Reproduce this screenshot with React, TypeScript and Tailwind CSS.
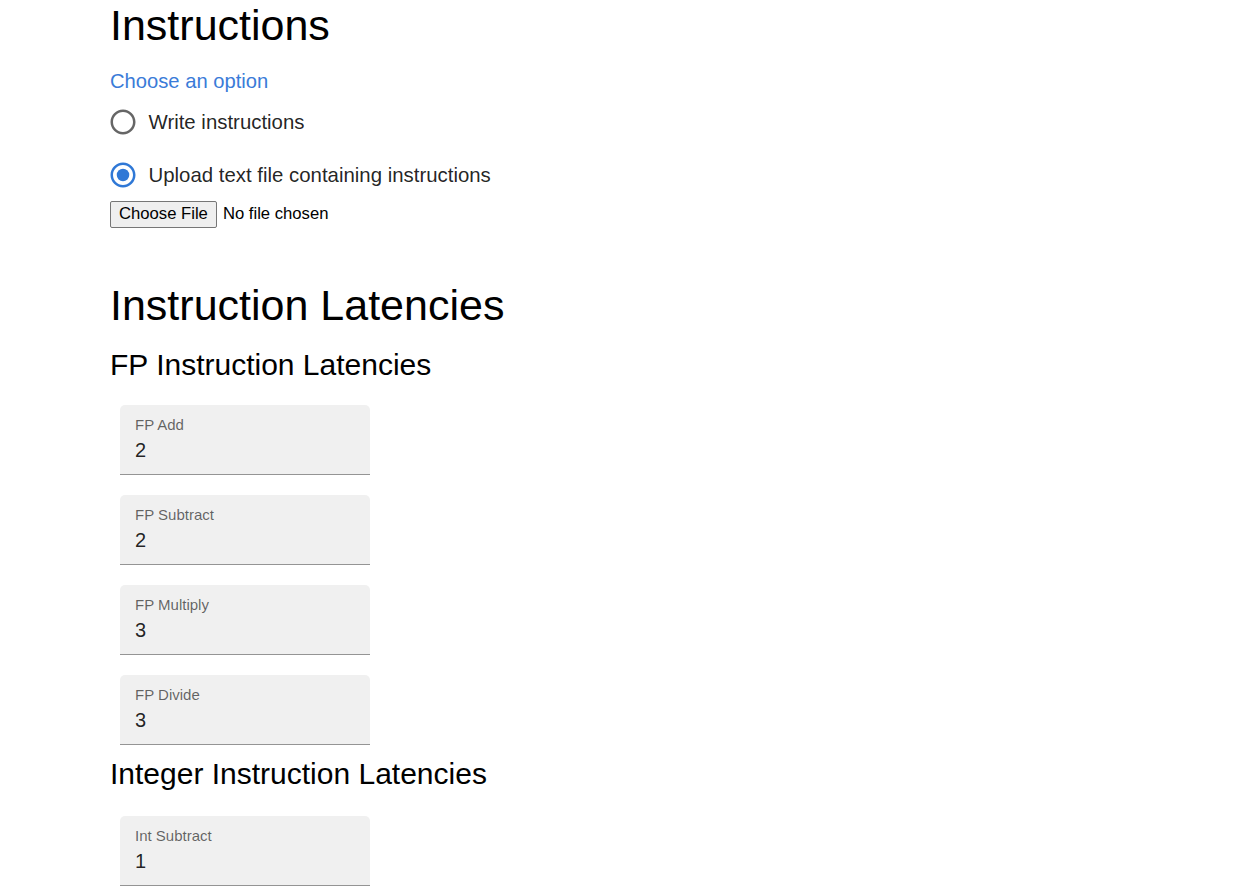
import React from "react";

// ============================================================
// Data
// ============================================================

const FP_FIELDS = [
  { label: "FP Add", value: "2" },
  { label: "FP Subtract", value: "2" },
  { label: "FP Multiply", value: "3" },
  { label: "FP Divide", value: "3" },
];

const INT_FIELDS = [{ label: "Int Subtract", value: "1" }];

// ============================================================
// Pieces
// ============================================================

function RadioIcon({ checked }: { checked: boolean }) {
  return (
    <svg
      className={`h-[30px] w-[30px] shrink-0 ${checked ? "text-[#2f78d6]" : "text-[#666666]"}`}
      viewBox="0 0 24 24"
      fill="currentColor"
    >
      <path d="M12 2C6.48 2 2 6.48 2 12s4.48 10 10 10 10-4.48 10-10S17.52 2 12 2zm0 18c-4.42 0-8-3.58-8-8s3.58-8 8-8 8 3.58 8 8-3.58 8-8 8z" />
      {checked && <circle cx="12" cy="12" r="5" />}
    </svg>
  );
}

function RadioRow({ label, checked }: { label: string; checked: boolean }) {
  return (
    <label className="flex h-[52.5px] items-center">
      <span className="-ml-[2.5px]">
        <RadioIcon checked={checked} />
      </span>
      <span className="ml-[11px] text-[20.4px] leading-none text-black/[0.87]">{label}</span>
    </label>
  );
}

function FilledField({ label, value }: { label: string; value: string }) {
  return (
    <div className="my-[10px] ml-[10px] h-[70px] w-[250px] rounded-t-[5px] border-b border-[#949494] bg-[#f0f0f0] px-[15px] pt-[11.5px]">
      <div className="text-[15px] leading-[15px] text-black/60">{label}</div>
      <div className="mt-[8px] text-[20px] leading-[20px] text-black/[0.87]">{value}</div>
    </div>
  );
}

// ============================================================
// Page
// ============================================================

export default function App() {
  return (
    <div className="min-h-[894px] bg-white pl-[110px] pt-[3.5px] font-['Liberation_Sans',Arial,sans-serif] text-black">
      <h1 className="text-[43px] font-normal leading-none">Instructions</h1>

      <div className="mt-[24px] text-[20.2px] leading-[20px] text-[#3a7bd8]">Choose an option</div>

      <div className="mt-[5.5px] flex flex-col">
        <RadioRow label="Write instructions" checked={false} />
        <RadioRow label="Upload text file containing instructions" checked />
      </div>

      <div className="flex items-center">
        <button
          type="button"
          className="h-[27px] rounded-[2px] border border-[#767676] bg-[#efefef] px-[8px] text-[16.67px] leading-none text-black"
        >
          Choose File
        </button>
        <span className="ml-[6px] text-[16.67px] leading-none">No file chosen</span>
      </div>

      <h1 className="mt-[55.5px] text-[43px] font-normal leading-none">Instruction Latencies</h1>

      <h2 className="mt-[21px] mb-[13.5px] text-[30px] font-normal leading-[34px]">FP Instruction Latencies</h2>
      <div className="flex flex-col">
        {FP_FIELDS.map((f) => (
          <FilledField key={f.label} label={f.label} value={f.value} />
        ))}
      </div>

      <h2 className="mt-[1.5px] mb-[15.5px] text-[30px] font-normal leading-[34px]">Integer Instruction Latencies</h2>
      <div className="flex flex-col">
        {INT_FIELDS.map((f) => (
          <FilledField key={f.label} label={f.label} value={f.value} />
        ))}
      </div>
    </div>
  );
}
